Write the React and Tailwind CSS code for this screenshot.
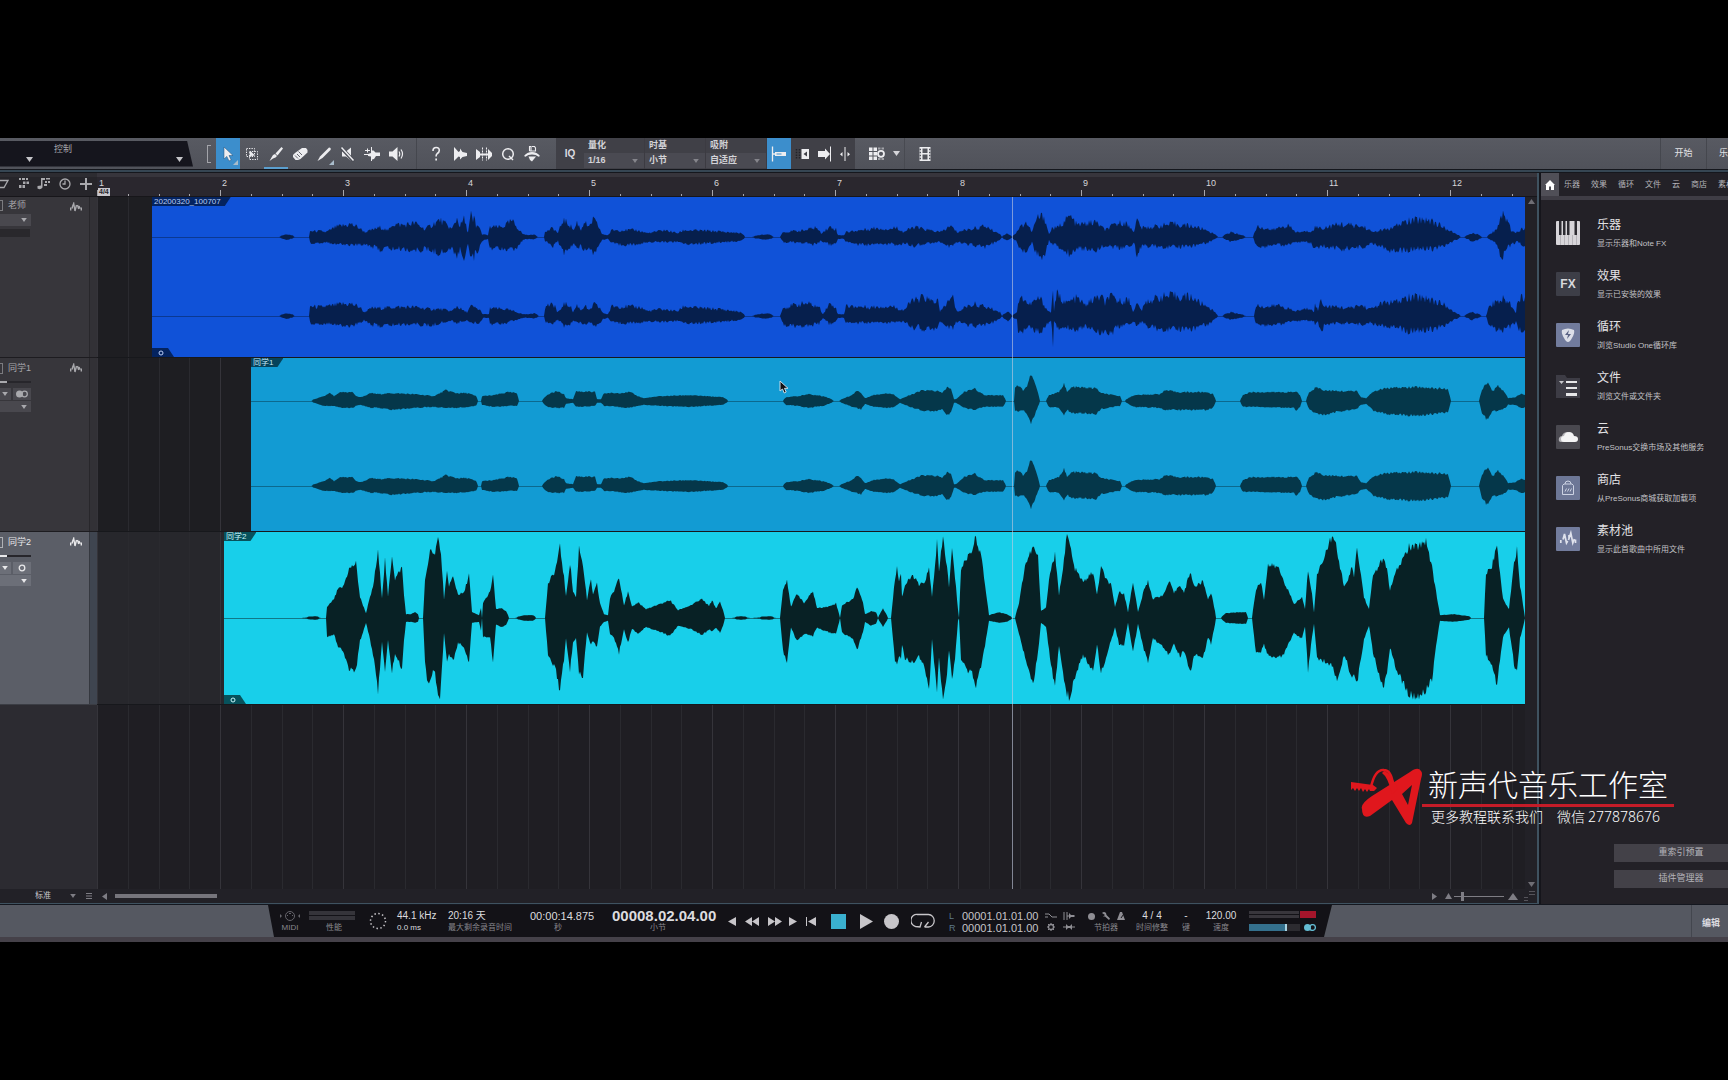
import { Fragment } from "react";
import clsx from "clsx";

const BAR = 123;
const BARS = 12;

// envelopes: "x,up,down" in px, down falls back to up
const TEACHER_LEFT =
    "279,0 287,2 295,0 309,0 310,5 320,5 326,4 336,9,6 351,12,7 358,9,7 365,4,6 381,9,12 388,5,10 392,12,11 404,11,11 415,13 425,7,11 440,16,15 452,7,11 457,18,17 460,10,12 464,17,20 468,4,5 471,22 473,12,14 474,21,20 476,8,13 478,12,13 482,2,3 488,1 490,9,10 502,9,10 512,15,12 517,9,10 523,2 529,1 533,2 538,0 544,0 545,4,3 553,8 558,3 563,16,15 569,12,11 574,6 577,14,12 581,6 584,15,13 589,8 593,17,16 599,9,8 602,2 608,1 612,6 636,6,7 648,3,4 664,6,4 678,3,4 684,6 715,5 727,4 741,3 745,0 751,0 767,2 774,0 780,0 783,4 806,6,5 816,9,7 821,3 830,9,7 836,7,6 838,1 844,1 846,4 861,6,7 875,8,7 890,7,6 897,9,8 903,4,5 914,9,8 929,6,5 940,4 951,10,9 957,4 964,6 986,10,9 992,6 999,3 1002,0 1007,3 1012,0 1016,3 1019,8,10 1026,14 1032,4 1037,18 1044,20 1049,2 1052,8,6 1057,8 1070,20,16 1077,11,10 1096,14,12 1105,6,7 1116,12,10 1124,14,10 1132,7 1134,5 1137,16,17 1142,8 1174,12,9 1192,10,8 1207,6,5 1218,0 1222,0 1231,4 1246,0 1253,0 1257,10 1272,6,7 1287,11,7 1296,4 1311,5 1315,9,12 1322,8 1341,12,11 1365,9 1372,4,5 1393,8,13 1404,14,12 1424,17,11 1432,15,11 1443,9,8 1452,4 1461,0 1464,0 1474,3,4 1482,0 1487,0 1497,7,6 1501,22 1508,16,10 1511,6,7 1517,4 1525,9";
const TEACHER_RIGHT =
    "279,0 287,2 295,0 309,0 310,9,6 320,8,7 330,9,6 342,11,9 352,11,9 360,8,6 364,3 372,7,8 382,7,9 392,8 415,8,7 430,6,9 440,6 452,4 457,9,6 464,4 467,3 471,9,6 480,5,6 483,1 489,1 490,7 505,6 517,3 523,1 529,1 534,2 539,0 544,0 546,10,6 555,10,6 557,3 560,4 563,11,9 570,10,8 573,3,4 577,10,6 581,5 585,10,8 589,4 594,11,9 600,7 603,2 608,1 612,9,6 640,8,6 648,4 660,6,5 678,4 684,9,6 700,7,6 720,6,5 741,3 745,0 751,0 767,2 774,0 780,0 783,7 790,9 806,12,9 819,8,7 823,1 829,11,7 835,9,6 838,1 844,1 846,9,6 870,8,6 892,9,6 903,5,4 906,7,6 914,17,11 918,13,9 923,19,13 930,14,11 938,14,11 940,3,4 945,10,8 953,18,12 956,5 960,4,5 966,9,8 975,11,9 990,7 1000,3,2 1002,0 1008,4,5 1012,0 1017,3 1018,13,16 1023,18,14 1029,10,8 1033,13,12 1040,17 1048,4,6 1051,3 1053,24,25 1054,5 1057,21,11 1066,12,10 1077,17,13 1085,10,9 1096,17,13 1102,18,17 1105,11,10 1109,19,18 1118,14,10 1129,15,7 1133,4,5 1137,11,8 1142,5 1146,13,9 1159,18,12 1172,19,12 1192,18,12 1200,12,9 1209,8,7 1218,0 1222,0 1231,3 1246,0 1254,0 1256,10,8 1268,8 1278,10,8 1287,7,5 1294,4 1311,7,4 1314,4 1315,10 1318,5 1321,16 1325,9,7 1350,7,6 1361,10,8 1370,6 1383,12,9 1398,13,10 1406,17,14 1424,18,14 1437,13,11 1445,10,8 1452,4 1461,0 1464,0 1472,3 1482,0 1486,0 1489,8 1495,13,12 1503,16,14 1510,12,10 1516,3,5 1518,16,14 1525,19,14";
const STUDENT_ONE =
    "311,0 324,4 330,7,4 334,4 341,8,6 353,8,6 356,4 361,3 371,7,6 379,6 391,7,8 415,6 434,4,5 446,10,6 456,7,6 468,7,5 476,4 478,0 481,0 482,4,3 494,5 508,8,4 517,7,4 519,0 542,0 543,1 547,5 556,9,6 564,6 566,2 573,1 576,9,5 595,8,4 597,1 601,1 604,7,4 616,7,5 630,8,6 638,4 644,2,3 660,4 688,5 707,4 723,3 728,0 783,0 786,3 798,4 808,6 824,4 834,0 839,0 852,5 857,10,6 861,7,8 865,2 873,5 886,7,6 893,6 900,1 910,5 923,10,9 938,9 942,7 947,13 951,11 954,1 956,1 964,8,6 974,12,8 984,5 1003,5 1006,0 1014,0 1015,13,9 1018,15,10 1023,10,8 1027,14,12 1031,26,21 1036,14,10 1040,0 1046,0 1049,5 1059,8,6 1064,17,13 1067,8 1072,13,11 1096,12 1101,7 1120,4 1122,0 1125,0 1130,3 1134,5 1159,6 1166,10,8 1177,8 1207,8 1213,6 1216,0 1240,0 1243,5 1250,8,5 1294,8,6 1296,9 1300,5 1302,0 1306,0 1309,8,7 1316,13,12 1324,10,13 1337,9,10 1357,9,7 1361,3 1366,2 1374,9 1387,12 1419,13,14 1448,11,10 1451,0 1479,0 1482,11 1487,18 1493,9 1498,15,9 1506,6 1508,2,3 1515,3 1520,6 1525,6";
const STUDENT_TWO =
    "300,0 316,1 321,0 326,0 327,10,18 334,18,15 338,28 343,30,32 349,48,50 356,54,52 360,20,22 366,4 369,16 373,30,35 378,65,73 382,20,22 385,58,55 388,20,22 392,63,53 395,38,35 402,50 404,22 406,3 411,3 415,5,4 418,3 419,0 423,0 425,38,45 428,50,67 431,72,58 434,62,50 438,78,72 440,70,78 442,50 444,17,14 447,45,42 449,32,36 453,40,42 458,23,24 464,24,28 469,43 472,5,4 479,2,3 481,9,12 482,0 483,14,18 490,25,18 493,42,43 496,8,6 502,9,8 506,6 509,0 515,0 525,2 533,2 536,0 545,0 548,33,36 555,46,48 560,70,72 564,40 566,20 570,55,52 573,26,24 576,20 579,70,53 583,53,57 587,17,13 591,38,26 593,22 597,33,28 600,14,8 604,3 608,2 610,19,15 614,26,20 619,41,34 624,12,10 628,25,24 632,10 638,15 646,8 660,13 670,17 678,7 691,12,10 702,18,16 709,11 712,17,12 716,9 720,15,14 723,7 725,0 731,0 741,1 751,0 770,1 776,0 780,0 783,27,32 787,38,42 791,10,9 797,24,22 804,14,15 813,26,17 817,9 830,11,14 836,14,15 840,0 842,12,14 853,18,20 857,31 863,15,14 865,3 871,6,7 876,5 878,0 883,9,8 888,0 891,0 895,38,42 897,50,46 899,38 901,45,38 902,20,25 905,32,40 913,42,43 919,32,38 924,34,45 929,48,73 932,20 937,75,72 939,45,40 943,80 947,50,55 949,30 952,68,62 955,40 958,8,2 959,0 961,48,40 966,58,50 972,68,55 976,80,66 981,62,48 987,18,15 989,2 999,5,4 1007,3 1012,0 1015,0 1019,14,15 1025,52,38 1033,70,65 1038,60,35 1041,6,4 1046,10,8 1050,45,38 1055,62,70 1059,22,26 1064,58,60 1067,82,75 1070,72,79 1074,50,60 1083,35,36 1093,45,52 1097,22,25 1101,50,54 1106,38 1111,32,22 1115,10,9 1119,25 1124,24,27 1128,5,4 1133,36,33 1138,5 1144,27,32 1148,36,42 1153,18,20 1164,23,28 1169,36 1174,24,26 1180,33,37 1184,24,32 1190,45,53 1195,30,35 1203,36,40 1208,18 1211,25 1215,6 1216,0 1221,0 1226,4 1239,5 1246,5 1248,0 1252,0 1256,28,35 1261,36,33 1264,18,25 1268,52,36 1278,50,40 1284,36,34 1294,13,14 1302,20 1305,8 1308,48,52 1312,24,18 1314,5 1317,42,40 1331,79,45 1335,76,55 1337,65 1344,32,35 1348,36,47 1352,50,60 1354,42,55 1357,68,65 1361,42,40 1364,20 1369,8,7 1373,42,33 1383,58,70 1387,48,52 1390,27,28 1396,45,50 1409,70,75 1417,70,80 1426,77,72 1432,50,60 1437,20 1440,2 1454,3 1469,1 1471,0 1484,0 1486,45,36 1491,48,45 1497,72,65 1503,18 1509,8,9 1514,56,45 1517,68,55 1520,32,20 1525,0";

const tracks = [
    {
        name: "老师",
        clipName: "20200320_100707",
        start: 152,
        row: "h-[161px]",
        margin: "ml-[55px]",
        clip: "bg-[#1052d8]",
        tab: "bg-[#04235f] text-[#b9cdf5]",
        wave: "#061f4d",
        rough: 0.28,
        channels: [
            { y: 40, data: TEACHER_LEFT },
            { y: 119, data: TEACHER_RIGHT },
        ],
        badge: true,
    },
    {
        name: "同学1",
        clipName: "同学1",
        start: 251,
        row: "h-[174px]",
        margin: "ml-[154px]",
        clip: "bg-[#129bd3]",
        tab: "bg-[#05435c] text-[#c4e6f5]",
        wave: "#05374a",
        rough: 0.1,
        channels: [
            { y: 43, data: STUDENT_ONE },
            { y: 128, data: STUDENT_ONE },
        ],
        stereo: true,
    },
    {
        name: "同学2",
        clipName: "同学2",
        start: 224,
        row: "h-[173px]",
        margin: "ml-[127px]",
        clip: "bg-[#18cfea]",
        tab: "bg-[#07525c] text-[#c9f5fa]",
        wave: "#082125",
        rough: 0.06,
        channels: [{ y: 86, data: STUDENT_TWO }],
        badge: true,
        mono: true,
        selected: true,
    },
];

function noise(n) {
    const v = Math.sin(n * 12.9898) * 43758.5453;
    return v - Math.floor(v);
}

function wavePath(data, y, rough) {
    const pts = data.split(" ").map((p) => {
        const [x, up, down = up] = p.split(",").map(Number);
        return { x, up, down };
    });
    // anything louder than the floor gets a little extra body
    const amp = (from, to, t, seed) => {
        const v = from + (to - from) * t;
        return v < 0.5 ? v : v * (1 - rough + 2 * rough * noise(seed)) + 0.8;
    };
    const top = [];
    const bottom = [];
    for (let i = 0; i < pts.length - 1; i++) {
        const a = pts[i];
        const b = pts[i + 1];
        for (let x = a.x; x < b.x; x++) {
            const t = (x - a.x) / (b.x - a.x);
            top.push(`${x} ${(y - amp(a.up, b.up, t, x)).toFixed(1)}`);
            bottom.push(`${x} ${(y + amp(a.down, b.down, t, x + 7)).toFixed(1)}`);
        }
    }
    const end = pts[pts.length - 1];
    top.push(`${end.x} ${y - end.up}`);
    bottom.push(`${end.x} ${y + end.down}`);
    return `M${top.join("L")}L${bottom.reverse().join("L")}Z`;
}

function Svg({ w = 16, h = 16, className, children }) {
    return (
        <svg
            width={w}
            height={h}
            viewBox={`0 0 ${w} ${h}`}
            fill="currentColor"
            className={clsx("shrink-0", className)}
            aria-hidden="true"
        >
            {children}
        </svg>
    );
}

function Caret({ className }) {
    return (
        <Svg w={7} h={5} className={className}>
            <path d="M0 0h7L3.5 5Z" />
        </Svg>
    );
}

const line = { fill: "none", stroke: "currentColor", strokeWidth: 1.3 };

const icons = {
    pointer: <path d="M4 1v12l2.800-2.600 2.200 4.600 2.200-1-2.200-4.500H13Z" stroke="#1f4f78" strokeWidth="0.500" />,
    range: (
        <>
            <path d="M2.500 2.500h8v8h-8Z" {...line} strokeDasharray="1.300 1.200" strokeWidth="1" />
            <path d="M5.500 5.500h8v8h-8Z" {...line} strokeDasharray="1.300 1.200" strokeWidth="1" />
            <path d="M6 5.500v5.500l1.500-1.200 1.500.2L10.500 9 7 5.500Z" />
        </>
    ),
    knife: (
        <>
            <path d="M13.500 1 15 2.500 9.500 9.500 7.500 7.500Z" />
            <path d="m7 8 2 2-1.500 1.500-2.500 1-3.500 2.500 2-3.500 1.500-2.500Z" />
        </>
    ),
    eraser: (
        <>
            <path d="M10 2h4l1.500 2v2.500L8.500 13l-2.500 1H3.500L1 11V9l2-2Z" />
            <path d="M6.500 5.500 10 9M3 9.500l3 3M5 8l3 3" stroke="#55575f" strokeWidth="0.900" />
        </>
    ),
    pencil: <path d="M13 1.500q2.500 0 1.500 2.500L6.500 12l-5 3L4 10.500Z" />,
    mute: (
        <>
            <path d="M2 5.500h4l5-4v13l-5-4H2Z" />
            <path d="M1 1.500 14 15.500" stroke="#4d4f57" strokeWidth="3.500" />
            <path d="M1.500 1.500l12 13" stroke="currentColor" strokeWidth="1.500" />
        </>
    ),
    bend: (
        <>
            <path d="M7 4.500h2.500l2 2H16v3.500h-4l-2 3-2 .5-1-3-3-.5v-2l3-1Z" />
            <path d="M7.500 1v14M0 8.500h6M1 4.500h5M3.500 2.500v4" {...line} strokeWidth="1" />
        </>
    ),
    speaker: (
        <>
            <path d="M1 5.500h3.500l5-4.500v14l-5-4.500H1Z" />
            <path d="M11 5.500q1.500 2.500 0 5M13 3.500q3 4.500 0 9" {...line} strokeWidth="1.200" />
        </>
    ),
    help: (
        <>
            <path d="M5 5q0-3.500 3.200-3.500T11.300 4.600Q11.300 6.500 9 7.800q-.9.600-.9 2.700" {...line} strokeWidth="1.600" />
            <path d="M7.300 12.500h1.700v2H7.300Z" />
        </>
    ),
    strip: (
        <>
            <path d="M2.500 1.500v13" {...line} strokeWidth="1" />
            <path d="M3 2l3.500 4L8 5V2.500L10.500 6 15 7v3l-4.500 1L8 13.500V11l-1.500-.5L3 14Z" />
        </>
    ),
    transient: (
        <>
            <path d="M0 3l4 3v5l-4 3ZM12 3l4 4v3l-4 4Z" />
            <path d="M6.500 1.500v13M10.500 1.500v13" {...line} strokeWidth="1" strokeDasharray="2 1" />
            <path d="M4 7.500h8v2H4Z" />
        </>
    ),
    quantize: (
        <>
            <circle cx="8" cy="8" r="5.300" {...line} strokeWidth="1.500" />
            <path d="m9 10 4 4" {...line} strokeWidth="1.500" />
        </>
    ),
    macro: (
        <>
            <path d="M5.500 5V.5h1.500V5M8 .5h2.500L11.500 2v3h-6" {...line} strokeWidth="1.100" />
            <path d="M0 10q3-4 8-4t8 4l-1.500.8Q12 8.500 8 8.500t-6.500 2.300Z" />
            <path d="M4.500 10.500H12L8 15.500 6 14Z" />
        </>
    ),
    snapStart: (
        <>
            <path d="M1.500.5v15M1.500 8h3" {...line} />
            <path d="M4 6h11v4H4Zm1.500 1.500v1h5v-1Z" fillRule="evenodd" />
        </>
    ),
    snapEdge: (
        <>
            <path d="M6.500 3h7.500v10H6.500Zm5.500 2.500L8.500 8 12 10.500Z" fillRule="evenodd" />
            <path d="M4.500 3v10M1.500 3v10" stroke="#232328" strokeWidth="1.500" strokeDasharray="1.500 1.200" />
        </>
    ),
    snapEnd: (
        <>
            <path d="M1 5h7V2.500L13 8l-5 5.500V11H1Z" />
            <path d="M13.500.5v15" {...line} strokeWidth="1" />
        </>
    ),
    snapGrid: (
        <>
            <path d="M8 1v14" {...line} strokeWidth="1" />
            <path d="M5.500 6v4.500L3 8.300ZM10.500 6v4.500L13 8.300Z" />
        </>
    ),
    grid: (
        <>
            <path d="M0 1.500h3.500V5H0ZM4.500 1.500H8V5H4.500ZM0 6h3.500v3.500H0ZM4.500 6H8v3.500H4.500ZM0 10.500h3.500V14H0ZM4.500 10.500H8V14H4.500Z" />
            <path d="M9 1.500h2.500v2H9ZM12.500 1.500H15v2h-2.500ZM9 12h2.500v2H9ZM12.500 12H15v2h-2.500Z" opacity="0.500" />
            <circle cx="12" cy="7.800" r="3" {...line} strokeWidth="1.800" />
        </>
    ),
    film: (
        <>
            <path d="M2.500 1h11v14h-11ZM5.500 2.500v4.500h5V2.500Zm0 6v5h5v-5Z" fillRule="evenodd" />
            <path d="M2.500 3.500h1.500M2.500 6.500h1.500M2.500 9.500h1.500M2.500 12.500h1.500M12 3.500h1.500M12 6.500h1.500M12 9.500h1.500M12 12.500h1.500" stroke="#54565e" strokeWidth="1.300" />
        </>
    ),
};

function ToolButton({ icon, label, active, underline, corner, width = "w-6" }) {
    return (
        <button
            type="button"
            aria-label={label}
            className={clsx(
                "relative flex shrink-0 items-center justify-center self-stretch text-[#ededf0]",
                width,
                active && "bg-[#3c8ecc]",
                underline && "border-b-2 border-[#5b9fcf] pt-0.5",
            )}
        >
            <Svg>{icons[icon]}</Svg>
            {corner && (
                <Svg w={5} h={5} className="absolute right-0.5 bottom-1 text-[#a9bccb]">
                    <path d="M5 0v5H0Z" />
                </Svg>
            )}
        </button>
    );
}

function ToolSelect({ label, value }) {
    return (
        <label className="flex w-[61px] flex-col border-r border-[#3c3b42] text-[9px] leading-[15px] font-bold text-[#d3d3d8]">
            <span className="pl-1">{label}</span>
            <span className="flex h-[15px] items-center bg-[#4a4a52] pr-1.5">
                <select className="w-full appearance-none bg-transparent pl-1 text-[9px] font-bold outline-none">
                    <option>{value}</option>
                </select>
                <Caret className="h-1 w-1.5 text-[#85858c]" />
            </span>
        </label>
    );
}

function Toolbar() {
    return (
        <header className="flex h-[31px] items-center overflow-hidden bg-linear-to-b from-[#585a62] to-[#50525a]">
            <div className="flex h-[26px] w-[193px] shrink-0 flex-col bg-[#15151d] pt-0.5 text-[9px] leading-3 text-[#a5a5ab] [clip-path:polygon(0_0,187px_0,100%_100%,0_100%)]">
                <span className="pl-[54px]">控制</span>
                <div className="flex justify-between pt-0.5 pr-2.5 pl-[26px] text-[#c6c6ca]">
                    <Caret />
                    <Caret />
                </div>
            </div>
            <span className="ml-3.5 h-[18px] w-1 shrink-0 border border-r-0 border-[#a3a4aa]" />
            <div className="ml-[5px] flex self-stretch border-r border-[#45474e] pr-2">
                <ToolButton icon="pointer" label="箭头" active corner />
                <ToolButton icon="range" label="范围" />
                <ToolButton icon="knife" label="切割" underline />
                <ToolButton icon="eraser" label="橡皮" />
                <ToolButton icon="pencil" label="绘制" corner />
                <ToolButton icon="mute" label="静音" />
                <ToolButton icon="bend" label="弯曲" />
                <ToolButton icon="speaker" label="试听" />
            </div>
            <div className="flex self-stretch pr-3 pl-[7px]">
                <ToolButton icon="help" label="帮助" />
                <ToolButton icon="strip" label="剥离静音" />
                <ToolButton icon="transient" label="瞬态" />
                <ToolButton icon="quantize" label="量化" />
                <ToolButton icon="macro" label="宏" />
            </div>
            <div className="flex self-stretch bg-[#404047]">
                <button type="button" className="w-7 text-[10px] font-bold text-[#dcdce0]">
                    IQ
                </button>
                <ToolSelect label="量化" value="1/16" />
                <ToolSelect label="时基" value="小节" />
                <ToolSelect label="吸附" value="自适应" />
                <ToolButton icon="snapStart" label="吸附到起点" active />
                <ToolButton icon="snapEdge" label="吸附到事件" />
                <ToolButton icon="snapEnd" label="吸附到终点" width="w-5" />
                <ToolButton icon="snapGrid" label="吸附到网格" width="w-5" />
            </div>
            <div className="flex items-center self-stretch border-r border-[#484a51] pr-1 pl-2.5 text-[#d5d5d9]">
                <ToolButton icon="grid" label="网格" />
                <Caret className="ml-1" />
            </div>
            <div className="flex self-stretch pl-2">
                <ToolButton icon="film" label="视频" />
            </div>
            <nav className="ml-auto flex self-stretch text-[9px] text-[#e3e3e6]">
                <a href="#start" className="flex w-[46px] items-center justify-center border-l border-[#45474e]">
                    开始
                </a>
                <a href="#song" className="flex w-[22px] items-center overflow-hidden border-l border-[#45474e] pl-3 whitespace-nowrap">
                    乐曲
                </a>
            </nav>
        </header>
    );
}

function Ruler() {
    const ticks = [];
    for (let i = 0; i < BARS * 8; i++) {
        const height = i % 8 === 0 ? 7 : i % 2 === 0 ? 3 : 1;
        ticks.push(<path key={i} d={`M${Math.round((i * BAR) / 8)}.5 20v-${height}`} />);
    }
    return (
        <div className="relative h-6 min-w-0 flex-1 overflow-hidden border-t-4 border-b border-t-[#37353c] border-b-[#17161a] bg-[#2a272e]">
            <svg className="absolute inset-0" width={BAR * BARS} height="20" stroke="#a8a7ac" aria-hidden="true">
                {ticks}
            </svg>
            <div className="flex text-[9px] leading-3 text-[#d6d6d9]">
                {Array.from({ length: BARS }, (_, i) => (
                    <div key={i} className="w-[123px] shrink-0 pl-[2px]">
                        {i + 1}
                    </div>
                ))}
            </div>
            <span className="absolute bottom-0 left-px bg-[#c9c7cc] px-px text-[7px] leading-[8px] font-bold text-[#26252a]">
                4/4
            </span>
        </div>
    );
}

function Grid() {
    return (
        <svg className="absolute inset-0 h-full w-full" aria-hidden="true">
            {Array.from({ length: BARS * 4 }, (_, i) => (
                <rect
                    key={i}
                    x={Math.round((i * BAR) / 4)}
                    width="1"
                    height="100%"
                    fill={i % 4 === 0 ? "#35343a" : "#2a2a2f"}
                />
            ))}
        </svg>
    );
}

function WaveGlyph() {
    return (
        <Svg w={12} h={10}>
            <path
                d="M.7 8.500V5.500M2.300 5 3.700 1.500 5 9 6.500 3M7.500 3 8.700 7M9 4l1 2.500M11.300 8.500V5.500M2.300 5v1.500"
                fill="none"
                stroke="currentColor"
                strokeWidth="1.400"
            />
        </Svg>
    );
}

function TrackHeader({ track }) {
    const { selected } = track;
    const audioInput = track.stereo || track.mono;
    const box = selected ? "bg-[#6c6f78]" : "bg-[#49484e]";
    return (
        <div
            className={clsx(
                "flex w-[97px] shrink-0 border-b",
                selected
                    ? "border-[#3b3d44] bg-[#5b5e67] text-[#e8e8ea]"
                    : "border-[#1d1c20] bg-[#37363b] text-[#a9a9ad]",
            )}
        >
            <div className={clsx("flex-1", audioInput ? "pt-1" : "pt-0.5")}>
                <div className="flex h-3 items-center text-[9px] leading-3">
                    <span className="h-[11px] w-[3px] border border-l-0 border-current opacity-60" />
                    <span className="flex-1 pl-[5px]">{track.name}</span>
                    <span className={clsx("pr-[7px]", !audioInput && "mt-1")}>
                        <WaveGlyph />
                    </span>
                </div>
                {audioInput ? (
                    <>
                        <div className="mt-1.5 flex h-[3px] w-[31px] items-center">
                            <span className="h-0.5 w-[7px] bg-current" />
                            <span className="h-0.5 flex-1 bg-[#27262b]" />
                        </div>
                        <div className="mt-[5px] flex h-3 gap-0.5">
                            <button type="button" aria-label="输入" className={clsx("flex w-[11px] items-center pl-0.5", box)}>
                                <Caret className="h-1 w-1.5" />
                            </button>
                            <button type="button" aria-label="声道" className={clsx("flex w-[18px] items-center justify-center", box)}>
                                <Svg w={12} h={8}>
                                    {track.stereo ? (
                                        <>
                                            <circle cx="3.500" cy="4" r="3.500" />
                                            <circle cx="8.500" cy="4" r="2.800" {...line} />
                                        </>
                                    ) : (
                                        <circle cx="6" cy="4" r="2.800" {...line} />
                                    )}
                                </Svg>
                            </button>
                        </div>
                        <button
                            type="button"
                            aria-label="输出"
                            className={clsx("mt-px flex h-[11px] w-[31px] items-center justify-end pr-1", box)}
                        >
                            <Caret className="h-1 w-1.5" />
                        </button>
                    </>
                ) : (
                    <>
                        <button
                            type="button"
                            aria-label="输出"
                            className={clsx("mt-[3px] flex h-3 w-[31px] items-center justify-end pr-1", box)}
                        >
                            <Caret className="h-1 w-1.5" />
                        </button>
                        <div className="mt-[3px] h-2 w-[30px] bg-[#29282c]" />
                    </>
                )}
            </div>
            <div
                className={clsx(
                    "w-2 border-l",
                    selected ? "border-[#35383f] bg-[#3f4550]" : "border-[#28272b] bg-[#323136]",
                )}
            />
        </div>
    );
}

function Clip({ track }) {
    return (
        <div className={clsx("relative min-w-0 flex-1 overflow-hidden", track.clip, track.margin)}>
            <svg
                className="absolute inset-0"
                width="1373"
                height="174"
                viewBox={`${track.start} 0 1373 174`}
                fill={track.wave}
                aria-hidden="true"
            >
                {track.channels.map((channel) => (
                    <Fragment key={channel.y}>
                        <rect x={track.start} y={channel.y} width="1373" height="1" opacity="0.5" />
                        <path d={wavePath(channel.data, channel.y, track.rough)} />
                    </Fragment>
                ))}
            </svg>
            <span
                className={clsx(
                    "absolute top-0 left-0 h-[9px] pr-2.5 pl-0.5 text-[8px] leading-[9px] [clip-path:polygon(0_0,100%_0,calc(100%-6px)_100%,0_100%)]",
                    track.tab,
                )}
            >
                {track.clipName}
            </span>
            {track.badge && (
                <span
                    className={clsx(
                        "absolute bottom-0 left-0 flex h-[9px] w-[22px] items-center pl-1.5 [clip-path:polygon(0_0,16px_0,100%_100%,0_100%)]",
                        track.tab,
                    )}
                >
                    <Svg w={6} h={6}>
                        <circle cx="3" cy="3" r="2" {...line} strokeWidth="1" />
                    </Svg>
                </span>
            )}
        </div>
    );
}

function Arranger() {
    return (
        <section className="flex min-w-0 flex-1 flex-col border-r-2 border-b border-[#3f5260] bg-[#222127]">
            <div className="flex">
                <div className="flex h-6 w-[97px] shrink-0 items-center border-t-4 border-b border-t-[#2d2c31] border-b-[#17161a] bg-[#26252a] pb-1.5 text-[#a9a9ad]">
                    <Svg w={14} h={12}>
                        <path d="M-4 9.500h8l4-7h-12" {...line} />
                    </Svg>
                    <Svg w={14} h={12} className="ml-0.5">
                        <path d="M3 0h2v2H3ZM6 0h3v2H6ZM10 0h2v2h-2ZM7 3.500h2.500V6H7ZM10.500 3.500H13V6h-2.500ZM3 7h2.500v3H3ZM6.500 7H9v3H6.500Z" />
                    </Svg>
                    <Svg w={14} h={12} className="ml-1.5">
                        <path d="M5 0h4v2H6.500v7.500q-2 3-5 1V8l3.500-.5ZM10 0h4v1.500h-4ZM9 3h2v2H9ZM12 3h2v2h-2ZM8 6h3v2H8Z" />
                    </Svg>
                    <Svg w={14} h={12} className="ml-2">
                        <circle cx="7" cy="6" r="5" {...line} />
                        <path d="M7 2.500V6H4.500" {...line} />
                    </Svg>
                    <Svg w={14} h={12} className="ml-[7px]">
                        <path d="M6 0h2v5h5v2H8v5H6V7H1V5h5Z" />
                    </Svg>
                </div>
                <Ruler />
            </div>
            <div className="relative flex flex-1">
                <div className="min-w-0 flex-1">
                    {tracks.map((track) => (
                        <div key={track.name} className={clsx("flex", track.row)}>
                            <TrackHeader track={track} />
                            <div
                                className={clsx(
                                    "relative flex min-w-0 flex-1 border-b border-[#17181c]",
                                    track.selected ? "bg-[#27272c]" : "bg-[#1e1e22]",
                                )}
                            >
                                <Grid />
                                <Clip track={track} />
                            </div>
                        </div>
                    ))}
                    <div className="flex h-[184px]">
                        <div className="w-[97px] shrink-0 bg-[#2c2b31]" />
                        <div className="relative flex-1 bg-[#1f1e23]">
                            <Grid />
                        </div>
                    </div>
                </div>
                <div className="flex w-3 shrink-0 flex-col items-center justify-between py-0.5 text-[#6f6e75]">
                    <Svg w={7} h={6}>
                        <path d="M3.500 0 7 5H0Z" />
                    </Svg>
                    <Caret />
                </div>
                <div className="absolute inset-y-0 left-[1012px] w-px bg-[#c4cce0]/60" />
                <Svg w={10} h={14} className="absolute top-[183px] left-[779px]">
                    <path
                        d="M1 1v10l2.500-2 1.700 4 2-1-1.700-3.700H9Z"
                        fill="#101012"
                        stroke="#c9dbe6"
                        strokeWidth="1"
                    />
                </Svg>
            </div>
            <footer className="flex h-3.5 items-center text-[#7e7d84]">
                <select
                    aria-label="轨道高度"
                    className="ml-[35px] h-3.5 w-[35px] appearance-none text-[8px] leading-[14px] text-[#c6c6ca] outline-none"
                >
                    <option>标准</option>
                </select>
                <Caret className="h-1 w-1.5" />
                <Svg w={6} h={6} className="ml-2.5">
                    <path d="M0 0h6v1H0ZM0 2.500h6v1H0ZM0 5h6v1H0Z" />
                </Svg>
                <Svg w={5} h={7} className="ml-2.5">
                    <path d="M5 0v7L0 3.500Z" />
                </Svg>
                <div className="ml-2 h-1 w-[102px] bg-[#76757c]" />
                <Svg w={5} h={7} className="ml-auto">
                    <path d="M0 0v7l5-3.500Z" />
                </Svg>
                <Svg w={7} h={6} className="ml-2">
                    <path d="M3.500 0 7 6H0Z" />
                </Svg>
                <Svg w={50} h={9} className="ml-0.5">
                    <path d="M0 4h50v1H0ZM7 0h3v9H7Z" />
                </Svg>
                <Svg w={10} h={7} className="ml-1">
                    <path d="M5 0l5 7H0Z" />
                </Svg>
                <Svg w={11} h={10} className="mr-0.5 ml-1.5 text-[#55545b]">
                    <path d="M5 0h6v1H5ZM5 3h6v1H5ZM0 6h4v1H0ZM0 9h4v1H0Z" />
                </Svg>
            </footer>
        </section>
    );
}

const browserItems = [
    {
        title: "乐器",
        text: "显示乐器和Note FX",
        icon: (
            <>
                <rect width="24" height="24" rx="1" fill="#d7d5d9" />
                <path d="M4.500 14v10M8.500 14v10M12.500 14v10M16.500 14v10M20.500 14v10" stroke="#b5b3b8" strokeWidth="1" />
                <path d="M3 0h2.500v14H3ZM7 0h2.500v14H7ZM11 0h2.500v14H11ZM18.500 0H21v14h-2.500Z" fill="#2c2b31" />
            </>
        ),
    },
    {
        title: "效果",
        text: "显示已安装的效果",
        icon: (
            <>
                <rect width="24" height="24" rx="1" fill="#3d3e47" />
                <text x="12" y="16" textAnchor="middle" fontSize="12" fontWeight="bold" fill="#d9d9dd">
                    FX
                </text>
            </>
        ),
    },
    {
        title: "循环",
        text: "浏览Studio One循环库",
        icon: (
            <>
                <rect width="24" height="24" rx="1" fill="#727c9d" />
                <path d="M6 7q6-3 12 0 1 3-2 8-2 4-4 4t-4-4Q5 10 6 7Z" fill="#dcdfe8" />
                <path d="m13 7-4 5h3l-1 4 4-5h-3Z" fill="#5a6384" />
            </>
        ),
    },
    {
        title: "文件",
        text: "浏览文件或文件夹",
        icon: (
            <>
                <path d="M0 1h9l2 3h13v20H0Z" fill="#3d3c45" />
                <path d="M3 7h5l-2.500 3Z" fill="#c8c8cc" />
                <path d="M10 7h11v2H10ZM10 13h11v2H10ZM10 19h11v3H10Z" fill="#e6e6e8" />
            </>
        ),
    },
    {
        title: "云",
        text: "PreSonus交换市场及其他服务",
        icon: (
            <>
                <rect width="24" height="24" rx="1" fill="#49484f" />
                <path d="M5 17q-3 0-2-4 1-2 3-2 1-4 6-4v10Z" fill="#b5b4b9" />
                <path d="M8 17q-3 0-3-3t3-3q1-4 5-4t5 4q4 0 4 3t-3 3Z" fill="#f4f4f5" />
            </>
        ),
    },
    {
        title: "商店",
        text: "从PreSonus商城获取加载项",
        icon: (
            <>
                <rect width="24" height="24" rx="1" fill="#6d7796" />
                <path d="M6.500 9.500 8 8h8l1.500 1.500v9h-11ZM9 8q0-3 3-3t3 3" fill="none" stroke="#cdd3e3" strokeWidth="1" />
                <path d="m9 15.500 1.500-3M11.500 15.500l1.500-3M14 15.500l1.500-3" stroke="#cdd3e3" strokeWidth="1" />
            </>
        ),
    },
    {
        title: "素材池",
        text: "显示此首歌曲中所用文件",
        icon: (
            <>
                <rect width="24" height="24" rx="1" fill="#727c9d" />
                <path
                    d="M4.800 13v3M7 12.500 8.500 7l2 9 1.200-2M12.500 13 14.800 6l2 10 1.500-4M19.500 12.500V16M13 8v4"
                    fill="none"
                    stroke="#dfe2ec"
                    strokeWidth="1.700"
                />
            </>
        ),
    },
];

function Browser() {
    return (
        <aside className="ml-0.5 flex w-[187px] shrink-0 flex-col overflow-hidden bg-[#232127]">
            <nav className="flex h-[27px] items-stretch gap-[11px] border-b-4 border-[#3f3d45] text-[8px] whitespace-nowrap text-[#b4b4b9]">
                <a href="#home" aria-label="主页" className="-mr-1.5 flex w-[18px] shrink-0 items-center justify-center bg-[#504f57] text-white">
                    <Svg w={10} h={10}>
                        <path d="m5 0 5 5H9v5H6V6.500H4V10H1V5H0Z" />
                    </Svg>
                </a>
                {["乐器", "效果", "循环", "文件", "云", "商店", "素材池"].map((tab, i) => (
                    <a key={tab} href={`#tab-${i}`} className="flex items-center">
                        {tab}
                    </a>
                ))}
            </nav>
            <ul className="pt-[17px] pl-[15px]">
                {browserItems.map((item) => (
                    <li key={item.title} className="flex h-[51px] gap-[17px] whitespace-nowrap">
                        <Svg w={24} h={24} className="mt-1">
                            {item.icon}
                        </Svg>
                        <div>
                            <h3 className="text-[12px] leading-4 text-[#e2e2e5]">{item.title}</h3>
                            <p className="pt-[5px] text-[8px] leading-[12px] text-[#c2c2c6]">{item.text}</p>
                        </div>
                    </li>
                ))}
            </ul>
            <div className="mt-auto flex flex-col gap-2 pb-4 pl-[73px] text-[9px] text-[#b5b4ba]">
                <button type="button" className="h-[18px] w-[134px] bg-[#434148]">
                    重索引预置
                </button>
                <button type="button" className="h-[18px] w-[134px] bg-[#434148]">
                    插件管理器
                </button>
            </div>
        </aside>
    );
}

function Readout({ value, label, className, valueClass }) {
    return (
        <div className={clsx("flex flex-col leading-3 whitespace-nowrap", className)}>
            <span className={clsx("h-3 text-[#dcdcdf]", valueClass || "text-[10px]")}>{value}</span>
            <span className="text-[8px] text-[#88878d]">{label}</span>
        </div>
    );
}

const transportButtons = [
    { label: "后退", box: "w-5", w: 8, h: 9, d: "M8 0v9L0 4.500Z" },
    { label: "快退", box: "w-5", w: 14, h: 9, d: "M7 0v9L0 4.500ZM14 0v9L7 4.500Z" },
    { label: "快进", box: "w-[25px]", w: 14, h: 9, d: "M0 0v9l7-4.500ZM7 0v9l7-4.500Z" },
    { label: "前进", box: "w-3", w: 8, h: 9, d: "M0 0v9l8-4.500Z" },
    { label: "回到零点", box: "w-6", w: 10, h: 9, d: "M0 0h1v9H0ZM10 0v9L2 4.500Z" },
    { label: "停止", box: "w-[31px]", w: 15, h: 15, d: "M0 0h15v15H0Z", color: "text-[#3ab0cf]" },
    { label: "播放", box: "w-6", w: 13, h: 15, d: "M0 0v15l13-7.500Z" },
    { label: "录音", box: "w-[26px]", w: 15, h: 15, d: "M7.500 0a7.500 7.500 0 0 1 0 15a7.500 7.500 0 0 1 0-15Z" },
];

function Transport() {
    return (
        <footer className="flex h-[38px] border-t border-b-[5px] border-t-[#14171f] border-b-[#454149] bg-[#555861]">
            <div className="ml-[268px] flex w-[1064px] shrink-0 bg-[#131217] pt-[5px] pl-0.5 text-[#c7c5c9] [clip-path:polygon(0_0,100%_0,1056px_100%,6px_100%)]">
                <Readout
                    className="w-10 items-center"
                    value={
                        <Svg w={20} h={12} className="text-[#65646b]">
                            <path d="M0 4v4l2-2ZM20 4v4l-2-2ZM7 5h1v1H7ZM12 5h1v1h-1ZM9 3h2v1H9Z" />
                            <circle cx="10" cy="6" r="4.500" {...line} strokeWidth="1" />
                        </Svg>
                    }
                    label="MIDI"
                />
                <Readout
                    className="w-12 items-center"
                    value={
                        <span className="flex flex-col gap-px pt-px pr-1">
                            <span className="h-1 w-[46px] bg-[#35343a]" />
                            <span className="h-1 w-[46px] bg-[#35343a]" />
                        </span>
                    }
                    label="性能"
                />
                <div className="flex w-[39px] justify-center pt-0.5">
                    <Svg w={18} h={18}>
                        <circle cx="9" cy="9" r="7.500" fill="none" stroke="currentColor" strokeWidth="1.500" strokeDasharray="1.500 2.430" />
                    </Svg>
                </div>
                <div className="flex w-[51px] flex-col leading-3 text-[#dcdcdf]">
                    <span className="text-[10px]">44.1 kHz</span>
                    <span className="text-[8px]">0.0 ms</span>
                </div>
                <Readout className="w-[82px]" value="20:16 天" label="最大剩余录音时间" />
                <Readout className="w-[82px]" valueClass="text-[11px]" value="00:00:14.875" label={<span className="pl-6">秒</span>} />
                <Readout
                    className="w-[110px]"
                    valueClass="text-[15px] font-bold"
                    value="00008.02.04.00"
                    label={<span className="pl-[38px]">小节</span>}
                />
                {transportButtons.map((b) => (
                    <button
                        key={b.label}
                        type="button"
                        aria-label={b.label}
                        className={clsx("flex h-[22px] shrink-0 items-center justify-center", b.box, b.color)}
                    >
                        <Svg w={b.w} h={b.h}>
                            <path d={b.d} />
                        </Svg>
                    </button>
                ))}
                <button type="button" aria-label="循环" className="flex h-[22px] w-[37px] items-center justify-center">
                    <Svg w={24} h={16}>
                        <path d="M4.500 13.500a5.500 6 0 0 1 2-12h11a5.500 6 0 0 1 0 12.500H13.500M4.500 13.500 9 14l1.500-5M13.500 14l4-5" {...line} />
                    </Svg>
                </button>
                <div className="grid w-[101px] grid-cols-[13px_1fr] content-start pl-2 leading-3">
                    <span className="text-[9px] text-[#5d7988]">L</span>
                    <span className="text-[11px]">00001.01.01.00</span>
                    <span className="text-[9px] text-[#5d7988]">R</span>
                    <span className="text-[11px]">00001.01.01.00</span>
                </div>
                <div className="grid w-9 grid-cols-2 items-center justify-items-center pb-1 text-[#8f8e94]">
                    <Svg w={12} h={8}>
                        <path d="M0 2h4l3 3h5M0 5h3" {...line} strokeWidth="1" />
                    </Svg>
                    <Svg w={12} h={8}>
                        <path d="M1 0v8M4 0v8M4 4h8" {...line} strokeWidth="1" />
                        <path d="m6 1 2 2h3v2H8L6 7Z" />
                    </Svg>
                    <Svg w={8} h={8}>
                        <circle cx="4" cy="4" r="2.500" {...line} />
                        <path d="M4 0v1.500M4 6.500V8M0 4h1.500M6.500 4H8M1 1l1 1M6 6l1 1M7 1 6 2M1 7l1-1" {...line} strokeWidth="1" />
                    </Svg>
                    <Svg w={12} h={8}>
                        <path d="M0 3.500h12v1H0ZM3 1l2 2h2l2-2v6L7 5H5L3 7Z" />
                    </Svg>
                </div>
                <Readout
                    className="ml-1 w-12 items-center"
                    value={
                        <span className="flex h-3 w-[45px] items-center justify-between px-1 text-[#8f8e94]">
                            <Svg w={7} h={7}>
                                <circle cx="3.500" cy="3.500" r="3.500" />
                            </Svg>
                            <Svg w={8} h={8}>
                                <path d="M0 1q2-2 4 0l.5 2L8 6.500 7 8 3 4.500H1L3 3Z" />
                            </Svg>
                            <Svg w={8} h={8}>
                                <path d="M3 0h2l3 8H0Z" />
                                <path d="M7.500 1 4 6" stroke="#131217" strokeWidth="1" />
                            </Svg>
                        </span>
                    }
                    label="节拍器"
                />
                <Readout className="w-11 items-center" value="4 / 4" label="时间修整" />
                <Readout className="w-6 items-center" value="-" label="键" />
                <Readout className="w-[46px] items-center" value="120.00" label="速度" />
                <div className="ml-[5px] flex w-[67px] flex-col gap-1.5 pt-px">
                    <div className="flex h-[7px] items-stretch gap-px">
                        <div className="flex flex-1 flex-col gap-px">
                            <span className="flex-1 bg-[#38363c]" />
                            <span className="flex-1 bg-[#38363c]" />
                        </div>
                        <span className="w-4 bg-[#a5152b]" />
                    </div>
                    <div className="flex h-[7px] items-stretch">
                        <span className="w-9 bg-[#34708d]" />
                        <span className="w-0.5 bg-[#a9d3e2]" />
                        <span className="w-[13px] bg-[#2c2b30]" />
                        <Svg w={12} h={7} className="ml-auto text-[#63bcd3]">
                            <circle cx="3.500" cy="3.500" r="3.500" />
                            <circle cx="8.500" cy="3.500" r="2.900" {...line} />
                        </Svg>
                    </div>
                </div>
            </div>
            <a href="#edit" className="ml-auto flex w-[37px] items-center justify-center border-l border-[#43464e] pt-1.5 pl-0.5 text-[9px] font-bold whitespace-nowrap text-[#dcdce0]">
                编辑
            </a>
        </footer>
    );
}

function StudioMark() {
    return (
        <div className="absolute right-[54px] bottom-[115px] flex items-start text-white">
            <Svg w={72} h={60} className="text-[#e0171d]">
                <path d="M1 15 23 18 27 21 24 24H20L19 22 17 25 15 22 13 25 11 21 9 24 7 21 5 24 3 21 1 23Z" />
                <path d="M21 20Q25 2 34 3q7 0 9 14" fill="none" stroke="currentColor" strokeWidth="2.500" />
                <path d="M12 42Q10 37 22 29L60 5q8-6 11-1 2 2 0 8L62 56q-2 4-6 0L42 33 20 49q-8 3-8-7ZM52 27l6 11 4-20Z" fillRule="evenodd" />
                <path d="M34 4q5 0 14 18l-6 5Q38 10 32 6Z" />
            </Svg>
            <div className="whitespace-nowrap">
                <p className="mb-1 pl-1.5 font-['Noto_Sans_CJK_SC',sans-serif] text-[30px] leading-[33px] font-light">
                    新声代音乐工作室
                </p>
                <div className="h-[3px] w-[252px] bg-[#c41c28]" />
                <p className="flex gap-[14px] pl-[9px] font-['Noto_Sans_CJK_SC',sans-serif] text-[14px] leading-[18px] font-light">
                    <span>更多教程联系我们</span>
                    <span>
                        微信 <span className="font-['Noto_Sans',sans-serif]">277878676</span>
                    </span>
                </p>
            </div>
        </div>
    );
}

export default function App() {
    return (
        <div className="flex min-h-screen flex-col justify-center overflow-hidden bg-black font-['Liberation_Sans','Noto_Sans_CJK_SC',sans-serif]">
            <div className="relative">
                <Toolbar />
                <div className="h-1 border-y border-[#15171d] bg-[#364653]" />
                <main className="flex bg-[#15151b]">
                    <Arranger />
                    <Browser />
                </main>
                <Transport />
                <StudioMark />
            </div>
        </div>
    );
}
